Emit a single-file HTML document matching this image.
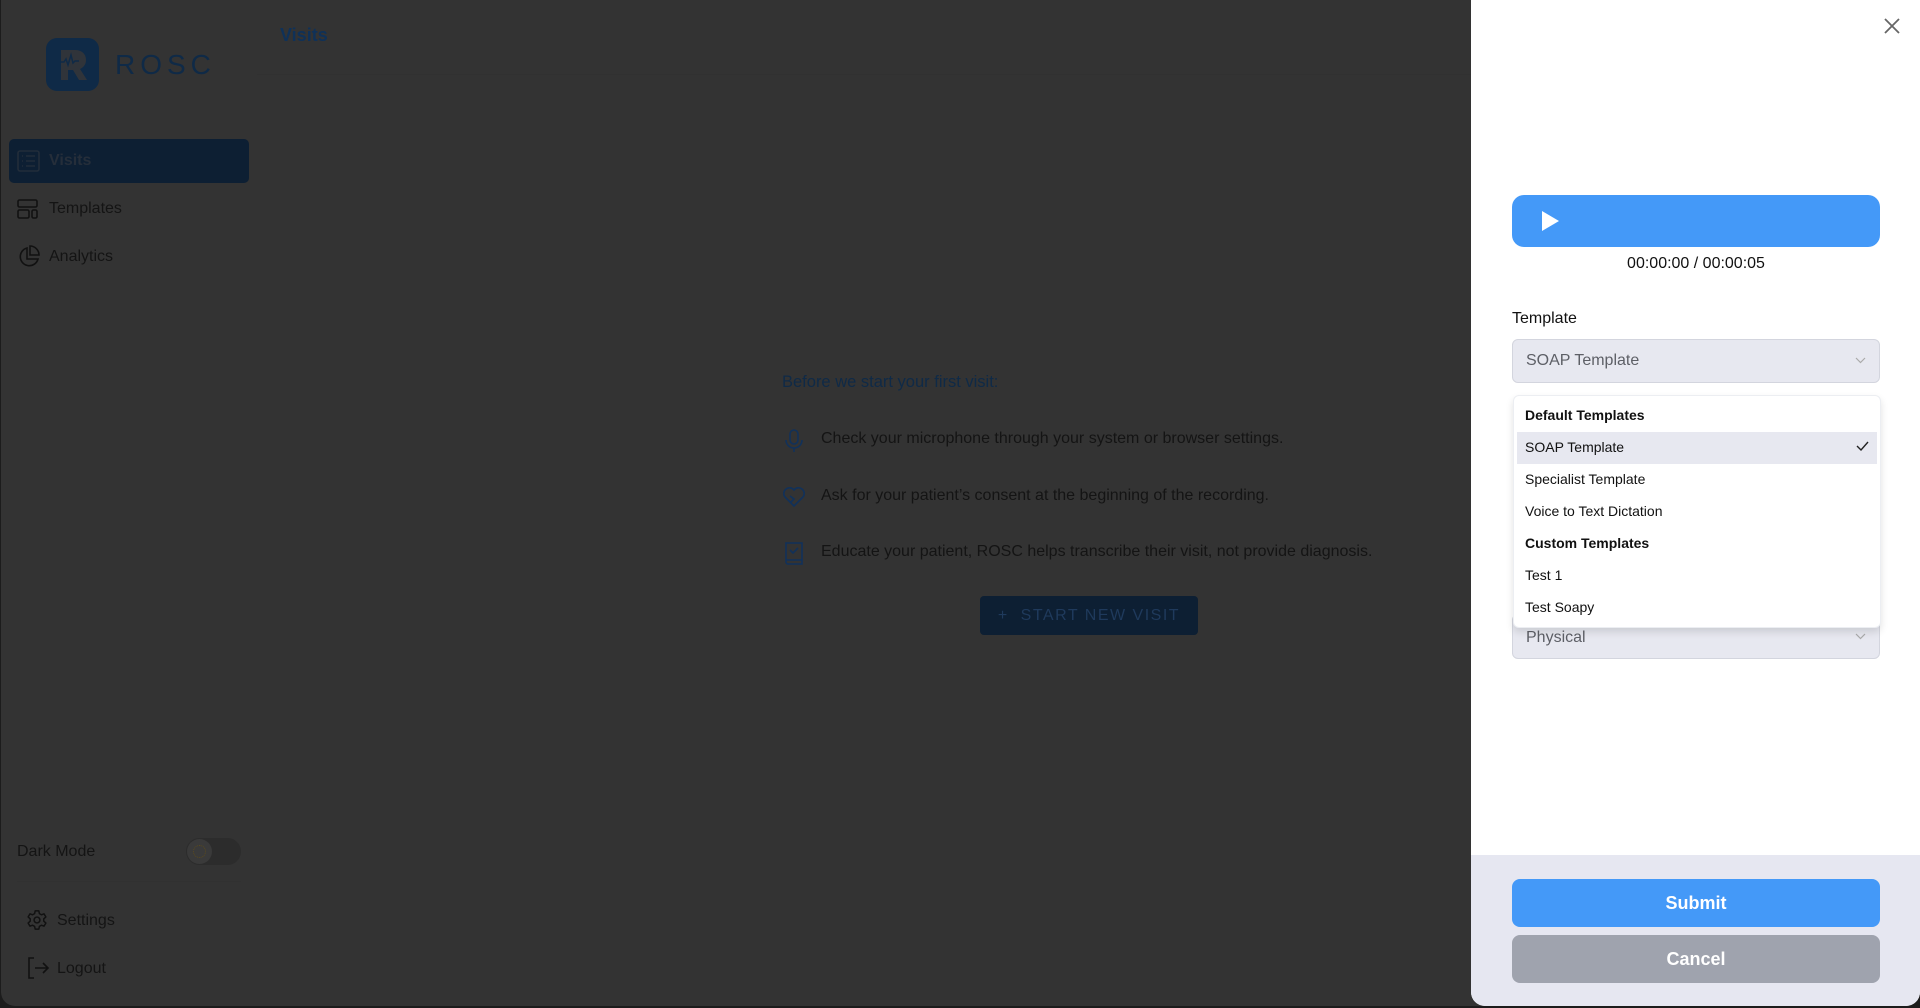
<!DOCTYPE html>
<html><head><meta charset="utf-8"><style>
*{box-sizing:border-box;margin:0;padding:0}
body{width:1920px;height:1008px;background:#1c1c1c;font-family:"Liberation Sans",sans-serif;position:relative;overflow:hidden}
.win{position:absolute;left:1px;top:0;width:1919px;height:1006px;background:#333333;border-radius:0 0 14px 14px;overflow:hidden}
.a{position:absolute}
.nav{position:absolute;left:48px;font-size:16px;color:#141414}
.ico{position:absolute;left:16px}
.panel{position:absolute;left:1471px;top:0;width:449px;height:1006px;background:#fff;border-radius:0 0 14px 14px;overflow:hidden}
.sel{position:absolute;left:41px;width:368px;height:44px;background:#e7e8f0;border:1px solid #d3d5de;border-radius:6px;font-size:16px;color:#5d5f66;padding:12px 0 0 13px}
.opt{position:absolute;left:42px;width:360px;height:32px;font-size:14px;color:#111;padding:8px 0 0 12px}
.btn{position:absolute;left:41px;width:368px;height:48px;border-radius:8px;color:#fff;font-weight:bold;font-size:18px;text-align:center;line-height:48px}
</style></head><body>
<div class="win">
 <svg class="a" style="left:45px;top:38px" width="53" height="53" viewBox="0 0 53 53"><rect width="53" height="53" rx="11" fill="#0f2a47"/><path d="M15 12h14c7 0 11 4 11 10c0 4-2 7-6 9l7 11h-8l-6-10h-5v10h-7z" fill="#30343a"/><path d="M14 24h4l2-3 2 6 3-10 2 8 2-2h4" stroke="#0f2a47" stroke-width="1.5" fill="none"/></svg>
 <div class="a" style="left:114px;top:49px;font-size:28px;letter-spacing:5px;color:#0f2a47">ROSC</div>
 <div class="a" style="left:279px;top:25px;font-size:18px;font-weight:bold;color:#0f3158">Visits</div>
 <div class="a" style="left:256px;top:74px;width:1216px;height:1px;background:#313131"></div>
 <div class="a" style="left:8px;top:139px;width:240px;height:44px;background:#0d1f33;border-radius:5px"></div>
 <svg class="ico" style="top:150px" width="24" height="22" viewBox="0 0 24 22"><rect x="1" y="1" width="21" height="20" rx="2" fill="none" stroke="#222d3a" stroke-width="1.6"/><path d="M5 6h1M9 6h9M5 11h1M9 11h9M5 16h1M9 16h9" stroke="#222d3a" stroke-width="1.6"/></svg>
 <div class="nav" style="top:152px;font-weight:bold;color:#252e3a">Visits</div>
 <svg class="ico" style="top:199px" width="22" height="20" viewBox="0 0 22 20"><rect x="1" y="1" width="19" height="7" rx="1.5" fill="none" stroke="#111" stroke-width="1.6"/><rect x="1" y="11" width="11" height="8" rx="1.5" fill="none" stroke="#111" stroke-width="1.6"/><rect x="15" y="11" width="5" height="8" rx="1.5" fill="none" stroke="#111" stroke-width="1.6"/></svg>
 <div class="nav" style="top:200px">Templates</div>
 <svg class="ico" style="top:245px" width="24" height="24" viewBox="0 0 24 24"><path d="M10 3a9 9 0 1 0 11 11h-11z" fill="none" stroke="#111" stroke-width="1.6"/><path d="M13 1a9 9 0 0 1 9 9h-9z" fill="none" stroke="#111" stroke-width="1.6"/></svg>
 <div class="nav" style="top:248px">Analytics</div>
 <div class="nav" style="left:16px;top:843px">Dark Mode</div>
 <div class="a" style="left:185px;top:838px;width:55px;height:27px;border-radius:14px;background:#2c2c2c"></div>
 <div class="a" style="left:186px;top:839px;width:25px;height:25px;border-radius:50%;background:#3a3a3a"></div>
 <div class="a" style="left:192px;top:845px;width:13px;height:13px;border-radius:50%;border:1.5px dotted #5a4a1e"></div>
 <div class="a" style="left:16px;top:881px;width:224px;height:1px;background:#313131"></div>
 <svg class="a" style="left:25px;top:909px" width="22" height="22" viewBox="0 0 24 24"><circle cx="12" cy="12" r="3.2" fill="none" stroke="#111" stroke-width="1.6"/><path d="M10 2h4l.6 3 2.2 1.3 2.9-1 2 3.4-2.3 2v2.6l2.3 2-2 3.4-2.9-1-2.2 1.3-.6 3h-4l-.6-3-2.2-1.3-2.9 1-2-3.4 2.3-2v-2.6l-2.3-2 2-3.4 2.9 1 2.2-1.3z" fill="none" stroke="#111" stroke-width="1.6" stroke-linejoin="round"/></svg>
 <div class="nav" style="left:56px;top:912px">Settings</div>
 <svg class="a" style="left:25px;top:957px" width="24" height="22" viewBox="0 0 24 22"><path d="M8 1H3v20h5" fill="none" stroke="#111" stroke-width="1.6"/><path d="M9 11h13M17 6l5 5-5 5" fill="none" stroke="#111" stroke-width="1.6"/></svg>
 <div class="nav" style="left:56px;top:960px">Logout</div>

 <div class="a" style="left:781px;top:373px;font-size:16.5px;color:#0f2a47">Before we start your first visit:</div>
 <svg class="a" style="left:783px;top:429px" width="20" height="24" viewBox="0 0 20 24"><rect x="6" y="1" width="8" height="14" rx="4" fill="none" stroke="#11315a" stroke-width="1.6"/><path d="M2 11a8 8 0 0 0 16 0M10 19v4" fill="none" stroke="#11315a" stroke-width="1.6"/></svg>
 <div class="a" style="left:820px;top:430px;font-size:16px;color:#141414">Check your microphone through your system or browser settings.</div>
 <svg class="a" style="left:781px;top:486px" width="24" height="22" viewBox="0 0 24 22"><path d="M12 20L3 11a5 5 0 0 1 9-7a5 5 0 0 1 9 7z" fill="none" stroke="#11315a" stroke-width="1.6"/><path d="M8 10l4 3-3 3" fill="none" stroke="#11315a" stroke-width="1.6"/></svg>
 <div class="a" style="left:820px;top:487px;font-size:16px;color:#141414">Ask for your patient’s consent at the beginning of the recording.</div>
 <svg class="a" style="left:783px;top:542px" width="20" height="23" viewBox="0 0 20 23"><path d="M2 1h16v21H4a2 2 0 0 1-2-2zM2 18h16" fill="none" stroke="#11315a" stroke-width="1.6"/><path d="M6 8l3 3 5-5" fill="none" stroke="#11315a" stroke-width="1.6"/></svg>
 <div class="a" style="left:820px;top:543px;font-size:16px;color:#141414">Educate your patient, ROSC helps transcribe their visit, not provide diagnosis.</div>
 <div class="a" style="left:979px;top:596px;width:218px;height:39px;background:#0d1f33;border-radius:4px;color:#1f3a5c;font-size:16px;letter-spacing:1.5px;text-align:center;line-height:39px">+&nbsp; START NEW VISIT</div>
</div>

<div class="panel">
 <svg class="a" style="left:413px;top:18px" width="16" height="16" viewBox="0 0 16 16"><path d="M1 1l14 14M15 1L1 15" stroke="#666" stroke-width="1.8"/></svg>
 <div class="a" style="left:41px;top:195px;width:368px;height:52px;background:#4499f8;border-radius:12px"></div>
 <svg class="a" style="left:71px;top:211px" width="17" height="20" viewBox="0 0 17 20"><path d="M0 0L17 10L0 20z" fill="#fff"/></svg>
 <div class="a" style="left:41px;top:255px;width:368px;text-align:center;font-size:16px;color:#111">00:00:00 / 00:00:05</div>
 <div class="a" style="left:41px;top:310px;font-size:16px;color:#111">Template</div>
 <div class="sel" style="top:339px">SOAP Template</div>
 <svg class="a" style="left:384px;top:357px" width="11" height="7" viewBox="0 0 11 7"><path d="M1 1l4.5 4.5L10 1" fill="none" stroke="#aaa" stroke-width="1.2"/></svg>
 <div class="sel" style="top:614px;height:45px;padding-top:14px">Physical</div>
 <svg class="a" style="left:384px;top:633px" width="11" height="7" viewBox="0 0 11 7"><path d="M1 1l4.5 4.5L10 1" fill="none" stroke="#aaa" stroke-width="1.2"/></svg>
 <div class="a" style="left:42px;top:395px;width:368px;height:233px;background:#fff;border:1px solid #eceef2;border-radius:6px;box-shadow:0 4px 8px rgba(0,0,0,.12)"></div>
 <div class="a" style="left:46px;top:432px;width:360px;height:32px;background:#e7e8f0"></div>
 <div class="opt" style="top:399px;font-weight:bold">Default Templates</div>
 <div class="opt" style="top:431px">SOAP Template</div>
 <svg class="a" style="left:385px;top:441px" width="13" height="10" viewBox="0 0 13 10"><path d="M1 5l4 4 7-8" fill="none" stroke="#222" stroke-width="1.4"/></svg>
 <div class="opt" style="top:463px">Specialist Template</div>
 <div class="opt" style="top:495px">Voice to Text Dictation</div>
 <div class="opt" style="top:527px;font-weight:bold">Custom Templates</div>
 <div class="opt" style="top:559px">Test 1</div>
 <div class="opt" style="top:591px">Test Soapy</div>
 <div class="a" style="left:0;top:855px;width:449px;height:151px;background:#e6e7f1"></div>
 <div class="btn" style="top:879px;background:#4499f8">Submit</div>
 <div class="btn" style="top:935px;background:#9fa3ae">Cancel</div>
</div>
</body></html>
